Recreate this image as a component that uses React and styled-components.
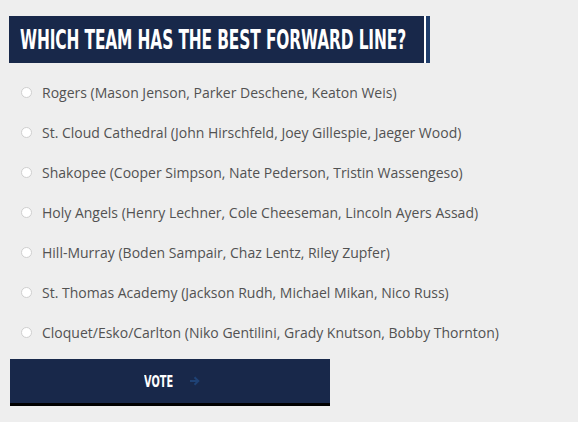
import React from 'react'
import styled, { createGlobalStyle } from 'styled-components'

const options = [
  'Rogers (Mason Jenson, Parker Deschene, Keaton Weis)',
  'St. Cloud Cathedral (John Hirschfeld, Joey Gillespie, Jaeger Wood)',
  'Shakopee (Cooper Simpson, Nate Pederson, Tristin Wassengeso)',
  'Holy Angels (Henry Lechner, Cole Cheeseman, Lincoln Ayers Assad)',
  'Hill-Murray (Boden Sampair, Chaz Lentz, Riley Zupfer)',
  'St. Thomas Academy (Jackson Rudh, Michael Mikan, Nico Russ)',
  'Cloquet/Esko/Carlton (Niko Gentilini, Grady Knutson, Bobby Thornton)',
]

const App = () => {
  return (
    <>
      <GlobalStyle />
      <Poll>
        <TitleBar>
          <Title>Which team has the best forward line?</Title>
        </TitleBar>
        <OptionList>
          {options.map((o, i) => (
            <Option key={i}>
              <Radio type="radio" name="poll" />
              <OptionText>{o}</OptionText>
            </Option>
          ))}
        </OptionList>
        <VoteButton>
          <VoteLabel>Vote</VoteLabel>
          <svg width="11" height="10" viewBox="0 0 11 10">
            <path d="M1 5h8M5.5 1.2L9.3 5 5.5 8.8" stroke="#1f4275" strokeWidth="2" fill="none" />
          </svg>
        </VoteButton>
      </Poll>
    </>
  )
}

export default App

const GlobalStyle = createGlobalStyle`
  body {
    margin: 0;
    background: #eeeeee;
  }
`

const Poll = styled.div`
  display: flex;
  flex-direction: column;
  align-items: flex-start;
  padding: 16px 0 0 9px;
`

const TitleBar = styled.div`
  width: 415px;
  height: 47px;
  background: #18284a;
  display: flex;
  align-items: center;
  overflow: hidden;
  box-shadow: 2px 0 0 #ffffff, 6px 0 0 #1f3d6b;
`

const Title = styled.h2`
  margin: -1px 0 0 11px;
  white-space: nowrap;
  font-family: "DejaVu Sans Condensed", "DejaVu Sans", sans-serif;
  font-stretch: condensed;
  font-weight: bold;
  font-size: 27px;
  letter-spacing: -0.2px;
  text-transform: uppercase;
  color: #ffffff;
  transform: scaleX(0.635);
  transform-origin: left center;
`

const OptionList = styled.div`
  display: flex;
  flex-direction: column;
  margin-top: 9px;
`

const Option = styled.label`
  display: flex;
  align-items: center;
  height: 40px;
  padding-left: 12px;
  gap: 10px;
`

const Radio = styled.input`
  appearance: none;
  margin: 0;
  width: 11px;
  height: 11px;
  border-radius: 50%;
  border: 1px solid #cfcfcf;
  background: #ffffff;
`

const OptionText = styled.span`
  font-family: "Open Sans", sans-serif;
  font-size: 14px;
  color: #525252;
`

const VoteButton = styled.button`
  margin: 7px 0 0 1px;
  width: 320px;
  height: 47px;
  border: none;
  border-bottom: 3px solid #000000;
  background: #18284a;
  display: flex;
  align-items: center;
  justify-content: center;
  gap: 14px;
  padding: 0 0 0 4px;
`

const VoteLabel = styled.span`
  font-family: "DejaVu Sans Condensed", "DejaVu Sans", sans-serif;
  font-weight: bold;
  font-size: 16px;
  text-transform: uppercase;
  color: #ffffff;
  display: inline-block;
  width: 31px;
  transform: scaleX(0.68);
  transform-origin: left center;
  white-space: nowrap;
`
